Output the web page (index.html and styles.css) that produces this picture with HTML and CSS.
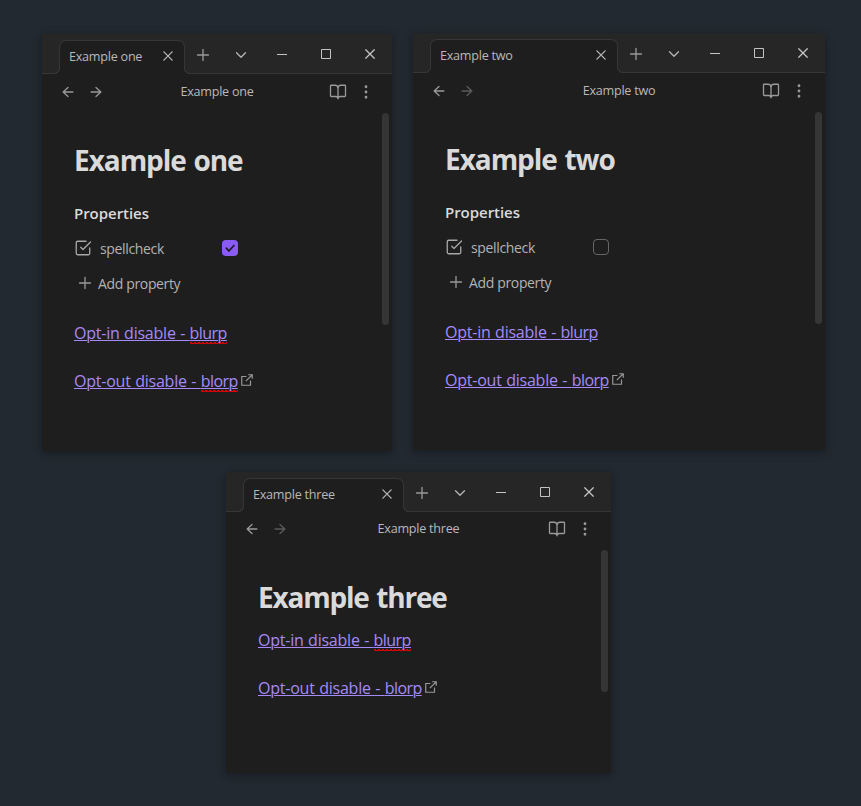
FILE: index.html
```html
<!DOCTYPE html>
<html lang="en">
<head>
<meta charset="utf-8">
<title>Examples</title>
<link rel="stylesheet" href="styles.css">
</head>
<body>
<svg class="defs" aria-hidden="true">
  <symbol id="x" viewBox="0 0 24 24"><path d="M17.500 6.500 6.500 17.500M6.500 6.500l11 11"/></symbol>
  <symbol id="plus" viewBox="0 0 24 24"><path d="M12 4.700v14.600M4.700 12h14.600"/></symbol>
  <symbol id="chevron" viewBox="0 0 24 24"><path d="m6 9 6 6 6-6"/></symbol>
  <symbol id="back" viewBox="0 0 24 24"><path d="M18.500 12H5.500M12 18l-6.500-6 6.500-6"/></symbol>
  <symbol id="forward" viewBox="0 0 24 24"><path d="M5.500 12h13M12 6l6.500 6-6.500 6"/></symbol>
  <symbol id="book" viewBox="0 0 24 24"><path d="M12 21v-14M3 18a1 1 0 0 1-1-1V4a1 1 0 0 1 1-1h5a4 4 0 0 1 4 4 4 4 0 0 1 4-4h5a1 1 0 0 1 1 1v13a1 1 0 0 1-1 1h-6a3 3 0 0 0-3 3 3 3 0 0 0-3-3z"/></symbol>
  <symbol id="dots" viewBox="0 0 24 24"><circle cx="12" cy="12" r="1"/><circle cx="12" cy="5" r="1"/><circle cx="12" cy="19" r="1"/></symbol>
  <symbol id="check-square" viewBox="0 0 24 24"><path d="m9 11 3 3L22 4"/><path d="M21 12v7a2 2 0 0 1-2 2H5a2 2 0 0 1-2-2V5a2 2 0 0 1 2-2h11"/></symbol>
  <symbol id="external" viewBox="0 0 24 24"><path d="M18 13v8H3V6h8M14 3h7v7M10 14 21 3"/></symbol>
  <symbol id="min" viewBox="0 0 10 10"><path d="M0 5.500h10"/></symbol>
  <symbol id="max" viewBox="0 0 10 10"><path d="M.5.5h9v9h-9z"/></symbol>
  <symbol id="close" viewBox="0 0 10 10"><path stroke-width="1.300" d="m.4.4 9.200 9.200M9.600.4.4 9.600"/></symbol>
</svg>

<section class="window one">
  <header class="titlebar">
    <div class="tab"><span>Example one</span><svg class="icon bright"><use href="#x"/></svg></div>
    <div class="add"><svg class="icon"><use href="#plus"/></svg></div>
    <div class="list"><svg class="icon bright"><use href="#chevron"/></svg></div>
    <div class="control"><svg><use href="#min"/></svg></div>
    <div class="control"><svg><use href="#max"/></svg></div>
    <div class="control"><svg><use href="#close"/></svg></div>
  </header>
  <div class="viewbar">
    <div class="group"><svg class="icon"><use href="#back"/></svg><svg class="icon"><use href="#forward"/></svg></div>
    <div class="name">Example one</div>
    <div class="group"><svg class="icon"><use href="#book"/></svg><svg class="icon"><use href="#dots"/></svg></div>
  </div>
  <main class="note">
    <h1>Example one</h1>
    <h2>Properties</h2>
    <div class="property"><svg class="type"><use href="#check-square"/></svg><span class="key">spellcheck</span><span class="box checked"><svg viewBox="0 0 16 16"><path d="m4.300 8.200 2.600 2.800 5-5.500"/></svg></span></div>
    <div class="property new"><svg class="icon"><use href="#plus"/></svg><span>Add property</span></div>
    <p><a>Opt-in disable - <span class="last wrong">blurp</span></a></p>
    <p><a>Opt-out disable - <span class="last wrong">blorp</span></a><svg class="external"><use href="#external"/></svg></p>
  </main>
  <div class="scrollbar"></div>
</section>

<section class="window two">
  <header class="titlebar">
    <div class="tab"><span>Example two</span><svg class="icon bright"><use href="#x"/></svg></div>
    <div class="add"><svg class="icon"><use href="#plus"/></svg></div>
    <div class="list"><svg class="icon bright"><use href="#chevron"/></svg></div>
    <div class="control"><svg><use href="#min"/></svg></div>
    <div class="control"><svg><use href="#max"/></svg></div>
    <div class="control"><svg><use href="#close"/></svg></div>
  </header>
  <div class="viewbar">
    <div class="group"><svg class="icon"><use href="#back"/></svg><svg class="icon dim"><use href="#forward"/></svg></div>
    <div class="name">Example two</div>
    <div class="group"><svg class="icon"><use href="#book"/></svg><svg class="icon"><use href="#dots"/></svg></div>
  </div>
  <main class="note">
    <h1>Example two</h1>
    <h2>Properties</h2>
    <div class="property"><svg class="type"><use href="#check-square"/></svg><span class="key">spellcheck</span><span class="box"></span></div>
    <div class="property new"><svg class="icon"><use href="#plus"/></svg><span>Add property</span></div>
    <p><a>Opt-in disable - <span class="last">blurp</span></a></p>
    <p><a>Opt-out disable - <span class="last">blorp</span></a><svg class="external"><use href="#external"/></svg></p>
  </main>
  <div class="scrollbar"></div>
</section>

<section class="window three">
  <header class="titlebar">
    <div class="tab"><span>Example three</span><svg class="icon bright"><use href="#x"/></svg></div>
    <div class="add"><svg class="icon"><use href="#plus"/></svg></div>
    <div class="list"><svg class="icon bright"><use href="#chevron"/></svg></div>
    <div class="control"><svg><use href="#min"/></svg></div>
    <div class="control"><svg><use href="#max"/></svg></div>
    <div class="control"><svg><use href="#close"/></svg></div>
  </header>
  <div class="viewbar">
    <div class="group"><svg class="icon"><use href="#back"/></svg><svg class="icon dim"><use href="#forward"/></svg></div>
    <div class="name">Example three</div>
    <div class="group"><svg class="icon"><use href="#book"/></svg><svg class="icon"><use href="#dots"/></svg></div>
  </div>
  <main class="note">
    <h1>Example three</h1>
    <p><a>Opt-in disable - <span class="last wrong">blurp</span></a></p>
    <p><a>Opt-out disable - <span class="last">blorp</span></a><svg class="external"><use href="#external"/></svg></p>
  </main>
  <div class="scrollbar"></div>
</section>
</body>
</html>
```
FILE: styles.css
```css
* { box-sizing: border-box; }

body {
  margin: 0;
  height: 806px;
  position: relative;
  overflow: hidden;
  background: #222930;
  color: #dadada;
  font-family: "Segoe UI", "Open Sans", "Noto Sans", sans-serif;
}

.defs { position: absolute; width: 0; height: 0; }

svg { flex: none; fill: none; stroke: currentColor; }

.icon {
  width: 18px;
  height: 18px;
  color: #999;
  stroke-width: 1.75;
  stroke-linecap: round;
  stroke-linejoin: round;
}
.icon.bright { color: #b3b3b3; stroke-width: 1.8; }
.icon.dim { color: #5a5a5a; }

/* Windows on the desktop */
.window {
  position: absolute;
  background: #1e1e1e;
  box-shadow: 0 2px 8px rgba(10, 14, 20, .45);
}
.one { left: 42px; top: 34px; width: 350px; height: 417px; --tab: 126px; }
.two { left: 413px; top: 33px; width: 412px; height: 417px; --tab: 188px; }
.three { left: 226px; top: 472px; width: 385px; height: 301px; --tab: 161px; }

.titlebar {
  display: flex;
  height: 40px;
  padding-left: 17px;
  background: #262626;
  border-bottom: 1px solid #363636;
}

.tab {
  position: relative;
  display: flex;
  align-items: center;
  justify-content: space-between;
  width: var(--tab);
  height: 34px;
  margin-top: 6px;
  padding: 0 7px 2px 9px;
  border: 1px solid #363636;
  border-bottom: 0;
  border-radius: 7px 7px 0 0;
  background: #1e1e1e;
  color: #b9b9b9;
  font-size: 12.6px;
  letter-spacing: -.24px;
  white-space: nowrap;
}
.tab .icon { margin-bottom: 1px; }
.tab::before, .tab::after {
  content: "";
  position: absolute;
  bottom: 0;
  width: 6px;
  height: 6px;
}
.tab::before { left: -6px; background: radial-gradient(circle at 0 0, #262626 4.700px, #363636 5.200px 5.800px, #1e1e1e 6.300px); }
.tab::after { right: -6px; background: radial-gradient(circle at 100% 0, #262626 4.700px, #363636 5.200px 5.800px, #1e1e1e 6.300px); }

.add, .list, .control {
  display: flex;
  align-items: center;
  justify-content: center;
}
.add { width: 36px; padding-top: 3px; }
.list { width: 38px; margin-left: auto; padding-top: 3px; }
.control { width: 44px; padding-top: 1px; }
.control svg { width: 10px; height: 10px; color: #c4c4c4; }

.viewbar {
  display: grid;
  grid-template-columns: 70px 1fr 70px;
  align-items: center;
  height: 36px;
  padding: 0 12px;
}
.three .viewbar { padding-bottom: 2px; }
.group { display: flex; gap: 10px; }
.group:first-child { padding-left: 5px; }
.group:last-child { justify-content: flex-end; padding-right: 5px; }
.name {
  color: #b9b9b9;
  font-size: 12.6px;
  letter-spacing: -.24px;
  line-height: 18px;
  text-align: center;
}

.note { padding: 33px 32px 0; }
.three .note { padding-top: 32px; }

h1 {
  margin: 0;
  font-size: 28px;
  font-weight: 700;
  line-height: 34px;
  letter-spacing: -1.050px;
  word-spacing: 1.500px;
  white-space: nowrap;
}
.three h1 { margin-bottom: 14px; letter-spacing: -1.200px; }

h2 {
  margin: 26px 0 12px;
  font-size: 15px;
  font-weight: 600;
  line-height: 20px;
  letter-spacing: -.04px;
}

.property {
  display: flex;
  align-items: center;
  height: 28px;
  color: #b3b3b3;
  font-size: 14px;
  letter-spacing: -.35px;
}
.property span:not(.box) { padding-bottom: 1px; }
.type {
  width: 18px;
  height: 18px;
  margin-bottom: 2px;
  color: #a8a8a8;
  stroke-width: 1.75;
  stroke-linecap: round;
  stroke-linejoin: round;
}
.key { width: 122px; margin-left: 8px; }
.box {
  display: flex;
  width: 16px;
  height: 16px;
  margin-bottom: 2px;
  border: 1px solid #666;
  border-radius: 4px;
}
.box.checked { border: 0; background: #8a5cf5; color: #1e1e1e; }
.box svg { width: 16px; height: 16px; stroke-width: 1.8; stroke-linecap: round; stroke-linejoin: round; }

.new { margin: 7px 0 23px; padding-left: 2px; }
.new .icon { margin: 0 4px 2px 0; }

p {
  display: flex;
  align-items: center;
  height: 24px;
  margin: 0 0 24px;
  font-size: 16px;
  line-height: 24px;
  white-space: pre;
}
a {
  color: #a68af9;
  letter-spacing: -.23px;
  word-spacing: .6px;
  text-decoration: underline 1px;
  text-underline-offset: 1px;
}
.last { letter-spacing: -.55px; }

/* Spellchecker squiggle: two dashed rows, half a period apart */
.wrong {
  background:
    repeating-linear-gradient(90deg, #e00000 0 2px, transparent 2px 4px) 0 calc(100% - 1px) / 100% 1px no-repeat,
    repeating-linear-gradient(90deg, #a00808 0 1px, #e00000 1px 4px) 0 100% / 100% 1px no-repeat;
}
.external {
  width: 14px;
  height: 14px;
  margin: 0 0 2px 2px;
  color: #999;
  stroke-width: 2;
}

.scrollbar {
  position: absolute;
  top: 79px;
  right: 3px;
  width: 7px;
  height: 212px;
  border-radius: 4px;
  background: #353535;
}
.three .scrollbar { top: 78px; height: 142px; }
```
